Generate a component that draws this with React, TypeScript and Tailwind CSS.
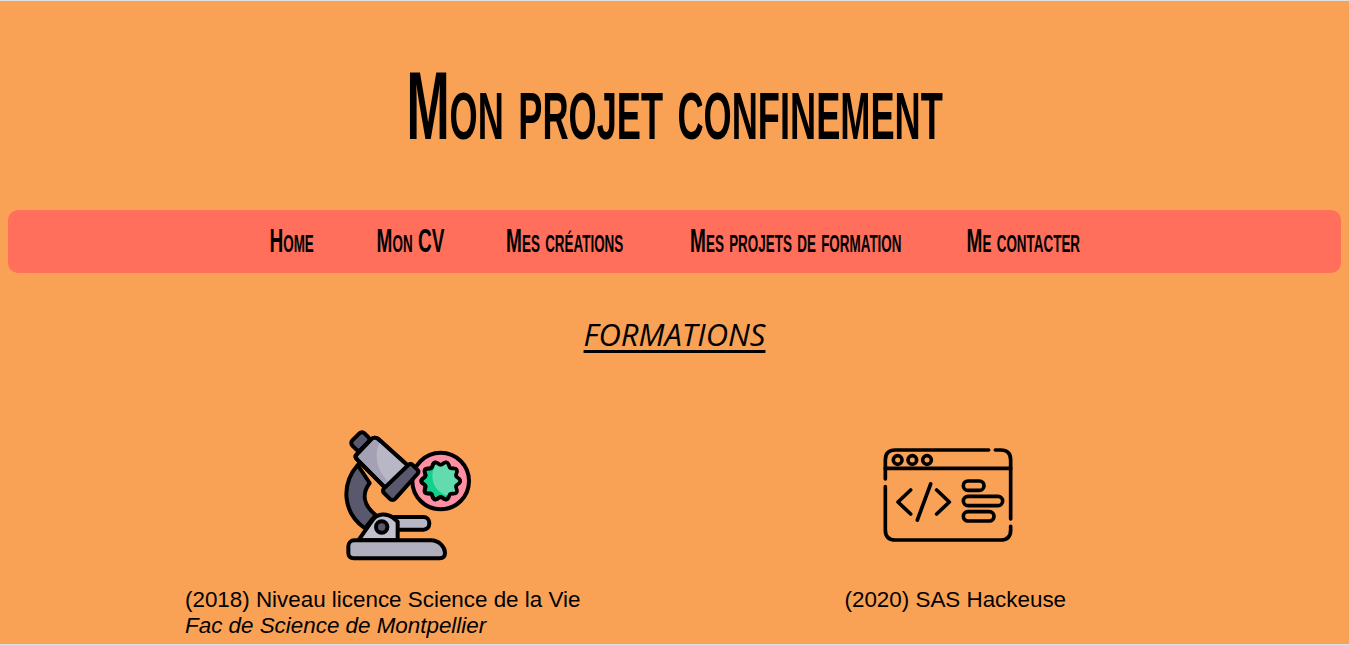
const titleFont = "font-['Liberation_Sans',sans-serif] [font-variant:small-caps] font-bold whitespace-nowrap";

const navItems = [
  { label: "Home", width: "w-[43px]" },
  { label: "Mon CV", width: "w-[63px]" },
  { label: "Mes créations", width: "w-[117px]" },
  { label: "Mes projets de formation", width: "w-[215px]" },
  { label: "Me contacter", width: "w-[110px]" },
];

// wavy badge outline for the microscope sample
const starPath =
  Array.from({ length: 120 }, (_, i) => {
    const a = (i / 120) * Math.PI * 2;
    const r = 53 + 5 * Math.cos(a * 10);
    return `${i === 0 ? "M" : "L"}${(335 + r * Math.cos(a)).toFixed(1)} ${(180 + r * Math.sin(a)).toFixed(1)}`;
  }).join("") + "Z";

function Microscope() {
  return (
    <svg viewBox="0 0 480 450" className="h-[150px] w-[160px]" fill="none" stroke="#000" strokeWidth="12" strokeLinejoin="round" strokeLinecap="round">
      <defs>
        <clipPath id="badge"><path d={starPath} /></clipPath>
      </defs>
      <circle cx="335" cy="180" r="85" fill="#ff8fa3" />
      <path d={starPath} fill="#10d08c" />
      <circle cx="372" cy="165" r="62" fill="#62dcae" stroke="none" clipPath="url(#badge)" />
      <path d={starPath} strokeWidth="10" />
      <path d="M86 132C36 190 40 275 108 322L140 282C100 250 100 215 122 186z" fill="#5a586d" />
      <rect x="68" y="42" width="52" height="38" rx="11" transform="rotate(-45 94 61)" fill="#5a586d" />
      <path d="M84 115c-5-5-5-11 0-16l42-44c6-6 15-7 22-1l100 90-68 68z" fill="#a3a1b3" />
      <path d="M152 62l93 82-50 54c-48-36-64-90-43-136z" fill="#b8b7c6" stroke="none" />
      <path d="M84 115c-5-5-5-11 0-16l42-44c6-6 15-7 22-1l100 90-68 68z" />
      <path d="M238 132c4-4 9-4 13 0l14 14c4 4 4 9 0 13l-66 74c-5 5-12 5-17 0l-17-17c-4-4-4-10 0-14z" fill="#5a586d" />
      <path d="M195 288h88c11 0 18 8 18 19s-7 19-18 19h-88z" fill="#b8b7c6" />
      <path d="M88 358l44-62c14-20 42-20 60-6l14 12v56z" fill="#c2c1ce" />
      <circle cx="158" cy="318" r="17" fill="#5a586d" />
      <path d="M76 358h230c24 0 42 20 42 38 0 10-6 16-16 16H74c-10 0-16-7-16-16v-20c0-10 8-18 18-18z" fill="#b0afbe" />
    </svg>
  );
}

function CodeWindow() {
  return (
    <svg viewBox="0 0 480 360" className="h-[120px] w-[160px]" fill="none" stroke="#000" strokeWidth="11" strokeLinecap="round" strokeLinejoin="round">
      <path d="M356 45H76Q46 45 46 75V132M46 155V285Q46 315 76 315H392Q422 315 422 285V274M422 252V75Q422 45 392 45H376" />
      <path d="M46 100H422" />
      <circle cx="83" cy="75" r="13" />
      <circle cx="127" cy="75" r="13" />
      <circle cx="171" cy="75" r="13" />
      <path d="M122 165L84 201L122 237M182 147L142 255M200 165L238 201L200 237" />
      <rect x="280" y="138" width="62" height="28" rx="14" />
      <rect x="280" y="184" width="118" height="28" rx="14" />
      <rect x="280" y="230" width="92" height="28" rx="14" />
    </svg>
  );
}

export default function App() {
  return (
    <div className="h-[645px] overflow-hidden border-y border-[#e0e0e0] bg-[#f9a155] px-2 font-['Liberation_Sans',Arial,sans-serif] text-black">
      <header className="flex h-[209px] items-center justify-center">
        <h1 className={`${titleFont} scale-x-[0.54] text-[96px] leading-none`}>Mon projet confinement</h1>
      </header>

      <nav className="flex h-[63px] items-center justify-center gap-[65px] rounded-[10px] bg-[#ff6f5b] pb-[2px]">
        {navItems.map((item) => (
          <a key={item.label} className={`flex justify-center ${item.width}`}>
            <span className={`${titleFont} scale-x-[0.56] text-[34px]`}>{item.label}</span>
          </a>
        ))}
      </nav>

      <h2 className="mt-[41px] text-center font-['Open_Sans',sans-serif] text-[31px] leading-[40px] font-medium italic underline decoration-[3px] underline-offset-[4px]">FORMATIONS</h2>

      <div className="mt-[67px] grid grid-cols-2">
        <div className="flex flex-col pl-[177px]">
          <div className="ml-[144px] h-[150px]"><Microscope /></div>
          <p className="mt-[16px] text-[22.4px] leading-[26px]">
            (2018) Niveau licence Science de la Vie<br />
            <em>Fac de Science de Montpellier</em>
          </p>
        </div>
        <div className="flex flex-col pl-[170px]">
          <div className="ml-[25px] mt-[14px] h-[136px]"><CodeWindow /></div>
          <p className="mt-[16px] text-[22.4px] leading-[26px]">(2020) SAS Hackeuse</p>
        </div>
      </div>
    </div>
  );
}
